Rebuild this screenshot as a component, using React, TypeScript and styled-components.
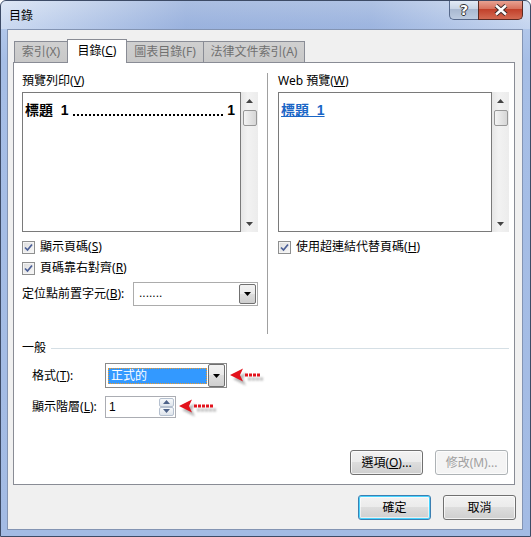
import React from "react";
import styled, { createGlobalStyle } from "styled-components";

const Global = createGlobalStyle`
  html, body { margin: 0; padding: 0; background: #fff; }
  body {
    font-family: "Noto Sans", "Noto Sans CJK TC", sans-serif;
    font-size: 12px;
    line-height: 16px;
    color: #000;
  }
  * { box-sizing: border-box; }
`;

const tabs = [
  { label: "索引", key: "X", w: 54 },
  { label: "目錄", key: "C", w: 60, active: true },
  { label: "圖表目錄", key: "F", w: 78 },
  { label: "法律文件索引", key: "A", w: 102 },
];

const Access = ({ text, k, colon }: { text: string; k: string; colon?: boolean }) => (
  <span>
    {text}(<u>{k}</u>){colon ? ":" : ""}
  </span>
);

const CheckMark = () => (
  <S.Check>
    <svg width="9" height="9" viewBox="0 0 9 9">
      <path d="M1 4.5 L3.5 7 L8 1.5" fill="none" stroke="#4b5f96" strokeWidth="1.7" />
    </svg>
  </S.Check>
);

const DownGlyph = () => (
  <svg width="7" height="4" viewBox="0 0 7 4">
    <path d="M0 0 H7 L3.5 4 Z" fill="#000" />
  </svg>
);

const RedArrow = ({ dots }: { dots: number }) => {
  const w = 15 + dots * 4 + 6;
  const shapes = (
    <>
      <path d="M1 7 L14 0.5 L11 7 L14 13.5 Z" />
      {Array.from({ length: dots }).map((_, i) => (
        <rect key={i} x={16 + i * 4} y={5.5} width={3} height={3} />
      ))}
    </>
  );
  return (
    <S.Arrow width={w} height="21" viewBox={`0 0 ${w} 21`}>
      <defs>
        <filter id="blur" x="-20%" y="-40%" width="140%" height="180%">
          <feGaussianBlur stdDeviation="1.3" />
        </filter>
      </defs>
      <g transform="translate(3 4)" fill="#7a7a7a" opacity="0.55" filter="url(#blur)">
        {shapes}
      </g>
      <g fill="#e3121c">{shapes}</g>
    </S.Arrow>
  );
};

const ScrollBar = () => (
  <S.Scroll>
    <S.ScrollArrow>
      <svg width="7" height="4" viewBox="0 0 7 4">
        <path d="M0 4 H7 L3.5 0 Z" fill="#444" />
      </svg>
    </S.ScrollArrow>
    <S.Thumb />
    <S.Fill />
    <S.ScrollArrow>
      <svg width="7" height="4" viewBox="0 0 7 4">
        <path d="M0 0 H7 L3.5 4 Z" fill="#444" />
      </svg>
    </S.ScrollArrow>
  </S.Scroll>
);

const App = () => {
  return (
    <>
      <Global />
      <S.Window>
        <S.TitleBar>
          <S.Title>目錄</S.Title>
          <S.Caption>
            <S.HelpBtn>?</S.HelpBtn>
            <S.CloseBtn>
              <svg width="14" height="12" viewBox="0 0 14 12">
                <path d="M2 1.5 L12 10.5 M12 1.5 L2 10.5" stroke="#3b2a2a" strokeWidth="4.4" />
                <path d="M2 1.5 L12 10.5 M12 1.5 L2 10.5" stroke="#fff" strokeWidth="2.4" />
              </svg>
            </S.CloseBtn>
          </S.Caption>
        </S.TitleBar>
        <S.Client>
          <S.TabStrip>
            {tabs.map((t) => (
              <S.Tab key={t.key} $w={t.w} $active={!!t.active}>
                <Access text={t.label} k={t.key} />
              </S.Tab>
            ))}
          </S.TabStrip>
          <S.Panel>
            <S.Top>
              <S.Col $w={236}>
                <S.Label>
                  <Access text="預覽列印" k="V" />
                </S.Label>
                <S.Preview>
                  <S.PreviewBox>
                    <S.TocLine>
                      <span>標題&nbsp;&nbsp;1</span>
                      <S.Leader />
                      <span>1</span>
                    </S.TocLine>
                  </S.PreviewBox>
                  <ScrollBar />
                </S.Preview>
                <S.CheckRow $mt={7}>
                  <CheckMark />
                  <Access text="顯示頁碼" k="S" />
                </S.CheckRow>
                <S.CheckRow $mt={5}>
                  <CheckMark />
                  <Access text="頁碼靠右對齊" k="R" />
                </S.CheckRow>
                <S.LeaderRow>
                  <Access text="定位點前置字元" k="B" colon />
                  <S.Combo $w={125}>
                    <S.ComboText>.......</S.ComboText>
                    <S.DropBtn>
                      <DownGlyph />
                    </S.DropBtn>
                  </S.Combo>
                </S.LeaderRow>
              </S.Col>
              <S.VSep />
              <S.Col>
                <S.Label>
                  Web 預覽(<u>W</u>)
                </S.Label>
                <S.Preview>
                  <S.PreviewBox>
                    <S.WebLink>標題&nbsp;&nbsp;1</S.WebLink>
                  </S.PreviewBox>
                  <ScrollBar />
                </S.Preview>
                <S.CheckRow $mt={7}>
                  <CheckMark />
                  <Access text="使用超連結代替頁碼" k="H" />
                </S.CheckRow>
              </S.Col>
            </S.Top>
            <S.GroupHeader>
              <span>一般</span>
              <S.GroupLine />
            </S.GroupHeader>
            <S.FieldRow $mt={6}>
              <S.FieldLabel>
                <Access text="格式" k="T" colon />
              </S.FieldLabel>
              <S.FormatCombo>
                <S.Selected>正式的</S.Selected>
                <S.DropBtn>
                  <DownGlyph />
                </S.DropBtn>
              </S.FormatCombo>
              <RedArrow dots={4} />
            </S.FieldRow>
            <S.FieldRow $mt={4}>
              <S.FieldLabel>
                <Access text="顯示階層" k="L" colon />
              </S.FieldLabel>
              <S.Spin>
                <S.SpinText>1</S.SpinText>
                <S.SpinBtns>
                  <S.SpinBtn>
                    <svg width="7" height="4" viewBox="0 0 7 4">
                      <path d="M0 4 H7 L3.5 0 Z" fill="#4d6288" />
                    </svg>
                  </S.SpinBtn>
                  <S.SpinBtn>
                    <svg width="7" height="4" viewBox="0 0 7 4">
                      <path d="M0 0 H7 L3.5 4 Z" fill="#4d6288" />
                    </svg>
                  </S.SpinBtn>
                </S.SpinBtns>
              </S.Spin>
              <RedArrow dots={5} />
            </S.FieldRow>
            <S.Grow />
            <S.ButtonRow $right={1}>
              <S.Button>
                <span>
                  選項(<u>O</u>)...
                </span>
              </S.Button>
              <S.Button $disabled>修改(M)...</S.Button>
            </S.ButtonRow>
          </S.Panel>
          <S.ButtonRow $right={0} $mt={10}>
            <S.Button $default>確定</S.Button>
            <S.Button>取消</S.Button>
          </S.ButtonRow>
        </S.Client>
      </S.Window>
    </>
  );
};

export default App;

const buttonFace = `
  linear-gradient(180deg, #f2f2f2 0%, #ebebeb 49%, #dddddd 50%, #cfcfcf 100%)
`;

const S = {
  Window: styled.div`
    width: 531px;
    height: 537px;
    border: 1px solid #3d4b66;
    border-radius: 6px 6px 0 0;
    background: linear-gradient(180deg, #cddbf0 0px, #b3c8ea 24px, #a6bee6 60px, #a3bbe4 100%);
    display: flex;
    flex-direction: column;
    padding: 0 7px 6px 6px;
    overflow: hidden;
  `,

  TitleBar: styled.div`
    height: 28px;
    display: flex;
    align-items: flex-start;
    margin: 0 -7px 0 -6px;
    padding: 0 7px 0 8px;
    background: linear-gradient(
      90deg,
      rgba(255, 255, 255, 0.35) 0%,
      rgba(120, 148, 205, 0.4) 35%,
      rgba(120, 148, 205, 0.35) 70%,
      rgba(255, 255, 255, 0.25) 100%
    );
  `,

  Title: styled.div`
    padding-top: 7px;
    font-size: 12px;
    color: #000;
  `,

  Caption: styled.div`
    margin-left: auto;
    display: flex;
    margin-top: -1px;
  `,

  HelpBtn: styled.div`
    width: 29px;
    height: 20px;
    border: 1px solid #56698b;
    border-top: none;
    border-right: none;
    border-radius: 0 0 0 5px;
    background: linear-gradient(180deg, #e6edf7 0%, #c9d5e6 45%, #a9b9d1 50%, #bccbe0 100%);
    display: flex;
    align-items: center;
    justify-content: center;
    color: #fff;
    font-family: "DejaVu Sans", sans-serif;
    font-weight: bold;
    font-size: 14px;
    text-shadow: 1px 0 0 #333, -1px 0 0 #333, 0 1px 0 #333, 0 -1px 0 #333;
  `,

  CloseBtn: styled.div`
    width: 45px;
    height: 20px;
    border: 1px solid #5b2a22;
    border-top: none;
    border-radius: 0 0 5px 0;
    background: linear-gradient(180deg, #eaa899 0%, #d8735f 45%, #c2412b 50%, #d36a52 100%);
    display: flex;
    align-items: center;
    justify-content: center;
  `,

  Client: styled.div`
    flex: 1;
    background: #f0f0f0;
    border: 1px solid #8394b3;
    padding: 9px 6px 8px 5px;
    display: flex;
    flex-direction: column;
  `,

  TabStrip: styled.div`
    display: flex;
    align-items: flex-end;
    height: 24px;
    margin-bottom: -1px;
    padding-left: 2px;
    position: relative;
    z-index: 1;
  `,

  Tab: styled.div<{ $w: number; $active: boolean }>`
    width: ${(p) => p.$w}px;
    height: ${(p) => (p.$active ? 24 : 21)}px;
    margin-bottom: ${(p) => (p.$active ? 0 : 1)}px;
    border: 1px solid #898c95;
    border-bottom: none;
    margin-left: -1px;
    background: ${(p) => (p.$active ? "#fff" : "linear-gradient(180deg, #d0d0d0, #c8c8c8)")};
    color: ${(p) => (p.$active ? "#000" : "#707070")};
    display: flex;
    align-items: center;
    justify-content: center;
    padding-bottom: ${(p) => (p.$active ? 2 : 0)}px;
    z-index: ${(p) => (p.$active ? 2 : 1)};
    u { text-decoration: ${(p) => (p.$active ? "underline" : "none")}; }
  `,

  Panel: styled.div`
    height: 423px;
    margin-right: 1px;
    border: 1px solid #898c95;
    background: #fff;
    display: flex;
    flex-direction: column;
    padding: 10px 5px 9px 8px;
  `,

  Top: styled.div`
    display: flex;
    height: 261px;
  `,

  Col: styled.div<{ $w?: number }>`
    display: flex;
    flex-direction: column;
    min-width: 0;
    ${(p) => (p.$w ? `width: ${p.$w}px; flex: none;` : "flex: 1;")}
  `,

  VSep: styled.div`
    width: 1px;
    flex: none;
    background: #a0a0a0;
    margin: 0 10px 0 9px;
  `,

  Label: styled.div`
    height: 16px;
    margin-bottom: 3px;
  `,

  Preview: styled.div`
    display: flex;
    height: 140px;
  `,

  PreviewBox: styled.div`
    flex: 1;
    min-width: 0;
    border: 1px solid #7a7a7a;
    background: #fff;
    padding: 9px 5px 0 2px;
  `,

  TocLine: styled.div`
    display: flex;
    font-weight: bold;
    font-size: 14px;
    line-height: 16px;
    white-space: nowrap;
    font-family: "Liberation Sans", "Noto Sans CJK TC", sans-serif;
  `,

  Leader: styled.span`
    flex: 1;
    min-width: 0;
    margin: 0 4px 0 3px;
    background-image: radial-gradient(circle, #000 1px, transparent 1.5px);
    background-size: 4px 4px;
    background-repeat: repeat-x;
    background-position: 0 11px;
  `,

  WebLink: styled.span`
    font-weight: bold;
    font-size: 14px;
    color: #1a66c6;
    text-decoration: underline;
    font-family: "Liberation Sans", "Noto Sans CJK TC", sans-serif;
  `,

  Scroll: styled.div`
    width: 17px;
    flex: none;
    display: flex;
    flex-direction: column;
    background: linear-gradient(90deg, #e6e6e6, #f2f2f2 40%, #ececec);
  `,

  ScrollArrow: styled.div`
    height: 17px;
    display: flex;
    align-items: center;
    justify-content: center;
  `,

  Thumb: styled.div`
    height: 16px;
    margin: 1px 1px 0 2px;
    border: 1px solid #979797;
    border-radius: 2px;
    background: linear-gradient(90deg, #f4f4f4, #e4e4e4 50%, #d6d6d6);
  `,

  Fill: styled.div`
    flex: 1;
  `,

  CheckRow: styled.div<{ $mt: number }>`
    display: flex;
    align-items: center;
    gap: 5px;
    height: 16px;
    margin-top: ${(p) => p.$mt}px;
    white-space: nowrap;
  `,

  Check: styled.div`
    width: 13px;
    height: 13px;
    flex: none;
    border: 1px solid #8e8f8f;
    background: linear-gradient(135deg, #dcdcdc, #f8f8f8);
    display: flex;
    align-items: center;
    justify-content: center;
    box-shadow: inset 0 0 0 1px #f4f4f4;
  `,

  LeaderRow: styled.div`
    display: flex;
    align-items: center;
    height: 24px;
    margin-top: 6px;
    justify-content: space-between;
    white-space: nowrap;
  `,

  Combo: styled.div<{ $w: number }>`
    width: ${(p) => p.$w}px;
    height: 24px;
    border: 1px solid #acacac;
    background: #fff;
    display: flex;
    padding: 1px;
  `,

  ComboText: styled.div`
    flex: 1;
    padding: 2px 4px;
    font-family: "Liberation Sans", sans-serif;
    line-height: 14px;
  `,

  DropBtn: styled.div`
    width: 17px;
    border: 1px solid #707070;
    border-radius: 2px;
    background: ${buttonFace};
    display: flex;
    align-items: center;
    justify-content: center;
  `,

  GroupHeader: styled.div`
    display: flex;
    align-items: center;
    height: 16px;
    margin-top: 6px;
  `,

  GroupLine: styled.div`
    flex: 1;
    height: 1px;
    background: #d5dfe5;
    margin-left: 5px;
  `,

  FieldRow: styled.div<{ $mt: number }>`
    display: flex;
    align-items: center;
    margin-top: ${(p) => p.$mt}px;
    padding-left: 10px;
  `,

  FieldLabel: styled.div`
    width: 73px;
  `,

  FormatCombo: styled.div`
    width: 122px;
    height: 25px;
    border: 1px solid #8a8a8a;
    background: #fff;
    display: flex;
    align-items: center;
    padding: 0 1px 0 2px;
    gap: 1px;
    > div:last-child { height: 23px; }
  `,

  Selected: styled.div`
    flex: 1;
    height: 16px;
    background: #3399ff;
    color: #fff;
    border: 1px dotted #f09a2a;
    padding-left: 2px;
    line-height: 14px;
  `,

  Spin: styled.div`
    width: 71px;
    height: 22px;
    border: 1px solid #abadb3;
    background: #fff;
    display: flex;
  `,

  SpinText: styled.div`
    flex: 1;
    padding: 2px 3px;
    font-family: "Liberation Sans", sans-serif;
  `,

  SpinBtns: styled.div`
    width: 16px;
    display: flex;
    flex-direction: column;
    padding: 1px 1px 1px 0;
  `,

  SpinBtn: styled.div`
    flex: 1;
    border: 1px solid #b5c0cf;
    border-radius: 2px;
    background: linear-gradient(180deg, #f7f9fb, #dfe5ec);
    display: flex;
    align-items: center;
    justify-content: center;
  `,

  Arrow: styled.svg`
    margin-left: 2px;
    margin-top: 6px;
  `,

  Grow: styled.div`
    flex: 1;
  `,

  ButtonRow: styled.div<{ $right: number; $mt?: number }>`
    display: flex;
    justify-content: flex-end;
    gap: 12px;
    margin-right: ${(p) => p.$right}px;
    margin-top: ${(p) => p.$mt ?? 0}px;
  `,

  Button: styled.div<{ $disabled?: boolean; $default?: boolean }>`
    width: 73px;
    height: 25px;
    border: 1px solid ${(p) => (p.$disabled ? "#adb2b5" : p.$default ? "#3c7fb1" : "#707070")};
    border-radius: 3px;
    background: ${(p) => (p.$disabled ? "#f4f4f4" : buttonFace)};
    color: ${(p) => (p.$disabled ? "#a0a0a0" : "#000")};
    box-shadow: ${(p) =>
      p.$default
        ? "inset 0 0 0 1px #48d4ff, inset 0 0 0 2px rgba(255,255,255,0.6)"
        : "inset 0 0 0 1px rgba(255,255,255,0.7)"};
    display: flex;
    align-items: center;
    justify-content: center;
  `,
};
